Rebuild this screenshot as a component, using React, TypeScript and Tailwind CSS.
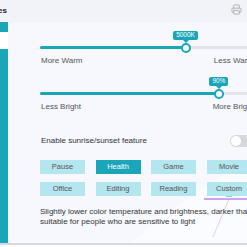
import { Printer } from "lucide-react";

const teal = "bg-[#1ba5b8]";

function Slider({ pct, tip }: { pct: number; tip: string }) {
  return (
    <div className="relative h-[3px] w-[214px] rounded-full bg-[#e2e4ea]">
      <div className={`h-full rounded-full ${teal}`} style={{ width: `${pct}%` }} />
      <div
        className="absolute top-1/2 flex flex-col items-center"
        style={{ left: `${pct}%`, transform: "translate(-50%, -50%)" }}
      >
        <div className="absolute bottom-[10px] flex flex-col items-center">
          <div className="rounded-[2px] bg-[#1ba5b8] px-[3px] h-[9px] flex items-center text-[6.5px] leading-none text-white whitespace-nowrap">
            {tip}
          </div>
          <div className="w-0 h-0 border-x-[3px] border-x-transparent border-t-[3px] border-t-[#1ba5b8]" />
        </div>
        <div className="w-[10px] h-[10px] rounded-full bg-white border-[2px] border-[#1ba5b8]" />
      </div>
    </div>
  );
}

export default function App() {
  const modes = ["Pause", "Health", "Game", "Movie", "Office", "Editing", "Reading", "Custom"];

  return (
    <div
      className="w-[247px] h-[247px] overflow-hidden bg-white text-[#333]"
      style={{ fontFamily: '"Liberation Sans", Arial, sans-serif' }}
    >
      {/* header */}
      <div className="h-[22px] bg-[#f2f2f9] flex items-center justify-between overflow-hidden">
        <span className="-ml-[21px] text-[8px] font-bold text-[#222]">Scenes</span>
        <Printer size={11} strokeWidth={1.5} className="mr-[5px] mb-[4px] text-[#9a9a9a]" />
      </div>

      <div className="flex h-[223px] border-b-[2px] border-[#d6d8de]">
        {/* sidebar */}
        <div className={`w-[8px] ${teal} pt-[10px] shrink-0`}>
          <div className="h-[17px] bg-white" />
        </div>

        {/* main */}
        <div className="relative flex-1 bg-[#f6f8fd] pl-[32px] overflow-hidden">
          <svg className="absolute left-0 top-0" width="239" height="223" viewBox="0 0 239 223">
            <path d="M120 223 C160 190 200 160 239 140 L239 223 Z" fill="#fbfcff" />
            <line x1="221" y1="177" x2="205" y2="215" stroke="#d9b8f0" strokeWidth="0.7" />
            <line x1="240" y1="177" x2="250" y2="205" stroke="#d9b8f0" strokeWidth="0.7" />
          </svg>

          <div className="relative pt-[24px]">
            <Slider pct={68} tip="5000K" />
            <div className="mt-[7px] flex w-[214px] justify-between text-[8px] leading-[10px] text-[#555]">
              <span className="pl-[1px]">More Warm</span>
              <span>Less Warm</span>
            </div>

            <div className="mt-[26px]">
              <Slider pct={83.6} tip="90%" />
            </div>
            <div className="mt-[7px] flex w-[214px] justify-between text-[8px] leading-[10px] text-[#555]">
              <span className="pl-[1px]">Less Bright</span>
              <span className="whitespace-nowrap">More Bright</span>
            </div>

            <div className="mt-[23px] flex w-[214px] items-center justify-between">
              <span className="pl-[1px] text-[8px] leading-[10px] text-[#333]">Enable sunrise/sunset feature</span>
              <div className="w-[24px] h-[12px] rounded-full bg-[#d7d8dc] flex items-center pl-[1px]">
                <div className="w-[10px] h-[10px] rounded-full bg-white" />
              </div>
            </div>

            <div className="mt-[13px] grid grid-cols-[repeat(4,45px)] gap-x-[10.5px] gap-y-[8px]">
              {modes.map((m) => (
                <div key={m} className="relative">
                  <div
                    className={`h-[14px] flex items-center justify-center text-[7.5px] ${
                      m === "Health" ? "bg-[#1ba5b8] text-white" : "bg-[#b4e6ef] text-[#555]"
                    }`}
                  >
                    {m}
                  </div>
                  {m === "Custom" && (
                    <>
                      <div className="absolute left-1/2 -translate-x-1/2 top-[14px] w-[6px] h-[1px] bg-[#7fd0e0]" />
                      <div className="absolute -left-[3px] top-[16px] w-[60px] h-[2px] bg-[#c9a3ee]" />
                    </>
                  )}
                </div>
              ))}
            </div>

            <p className="mt-[11px] whitespace-nowrap text-[8px] leading-[9.5px] text-[#333]">
              Slightly lower color temperature and brightness, darker than office,
              <br />
              suitable for people who are sensitive to light
            </p>
          </div>
        </div>
      </div>
    </div>
  );
}
